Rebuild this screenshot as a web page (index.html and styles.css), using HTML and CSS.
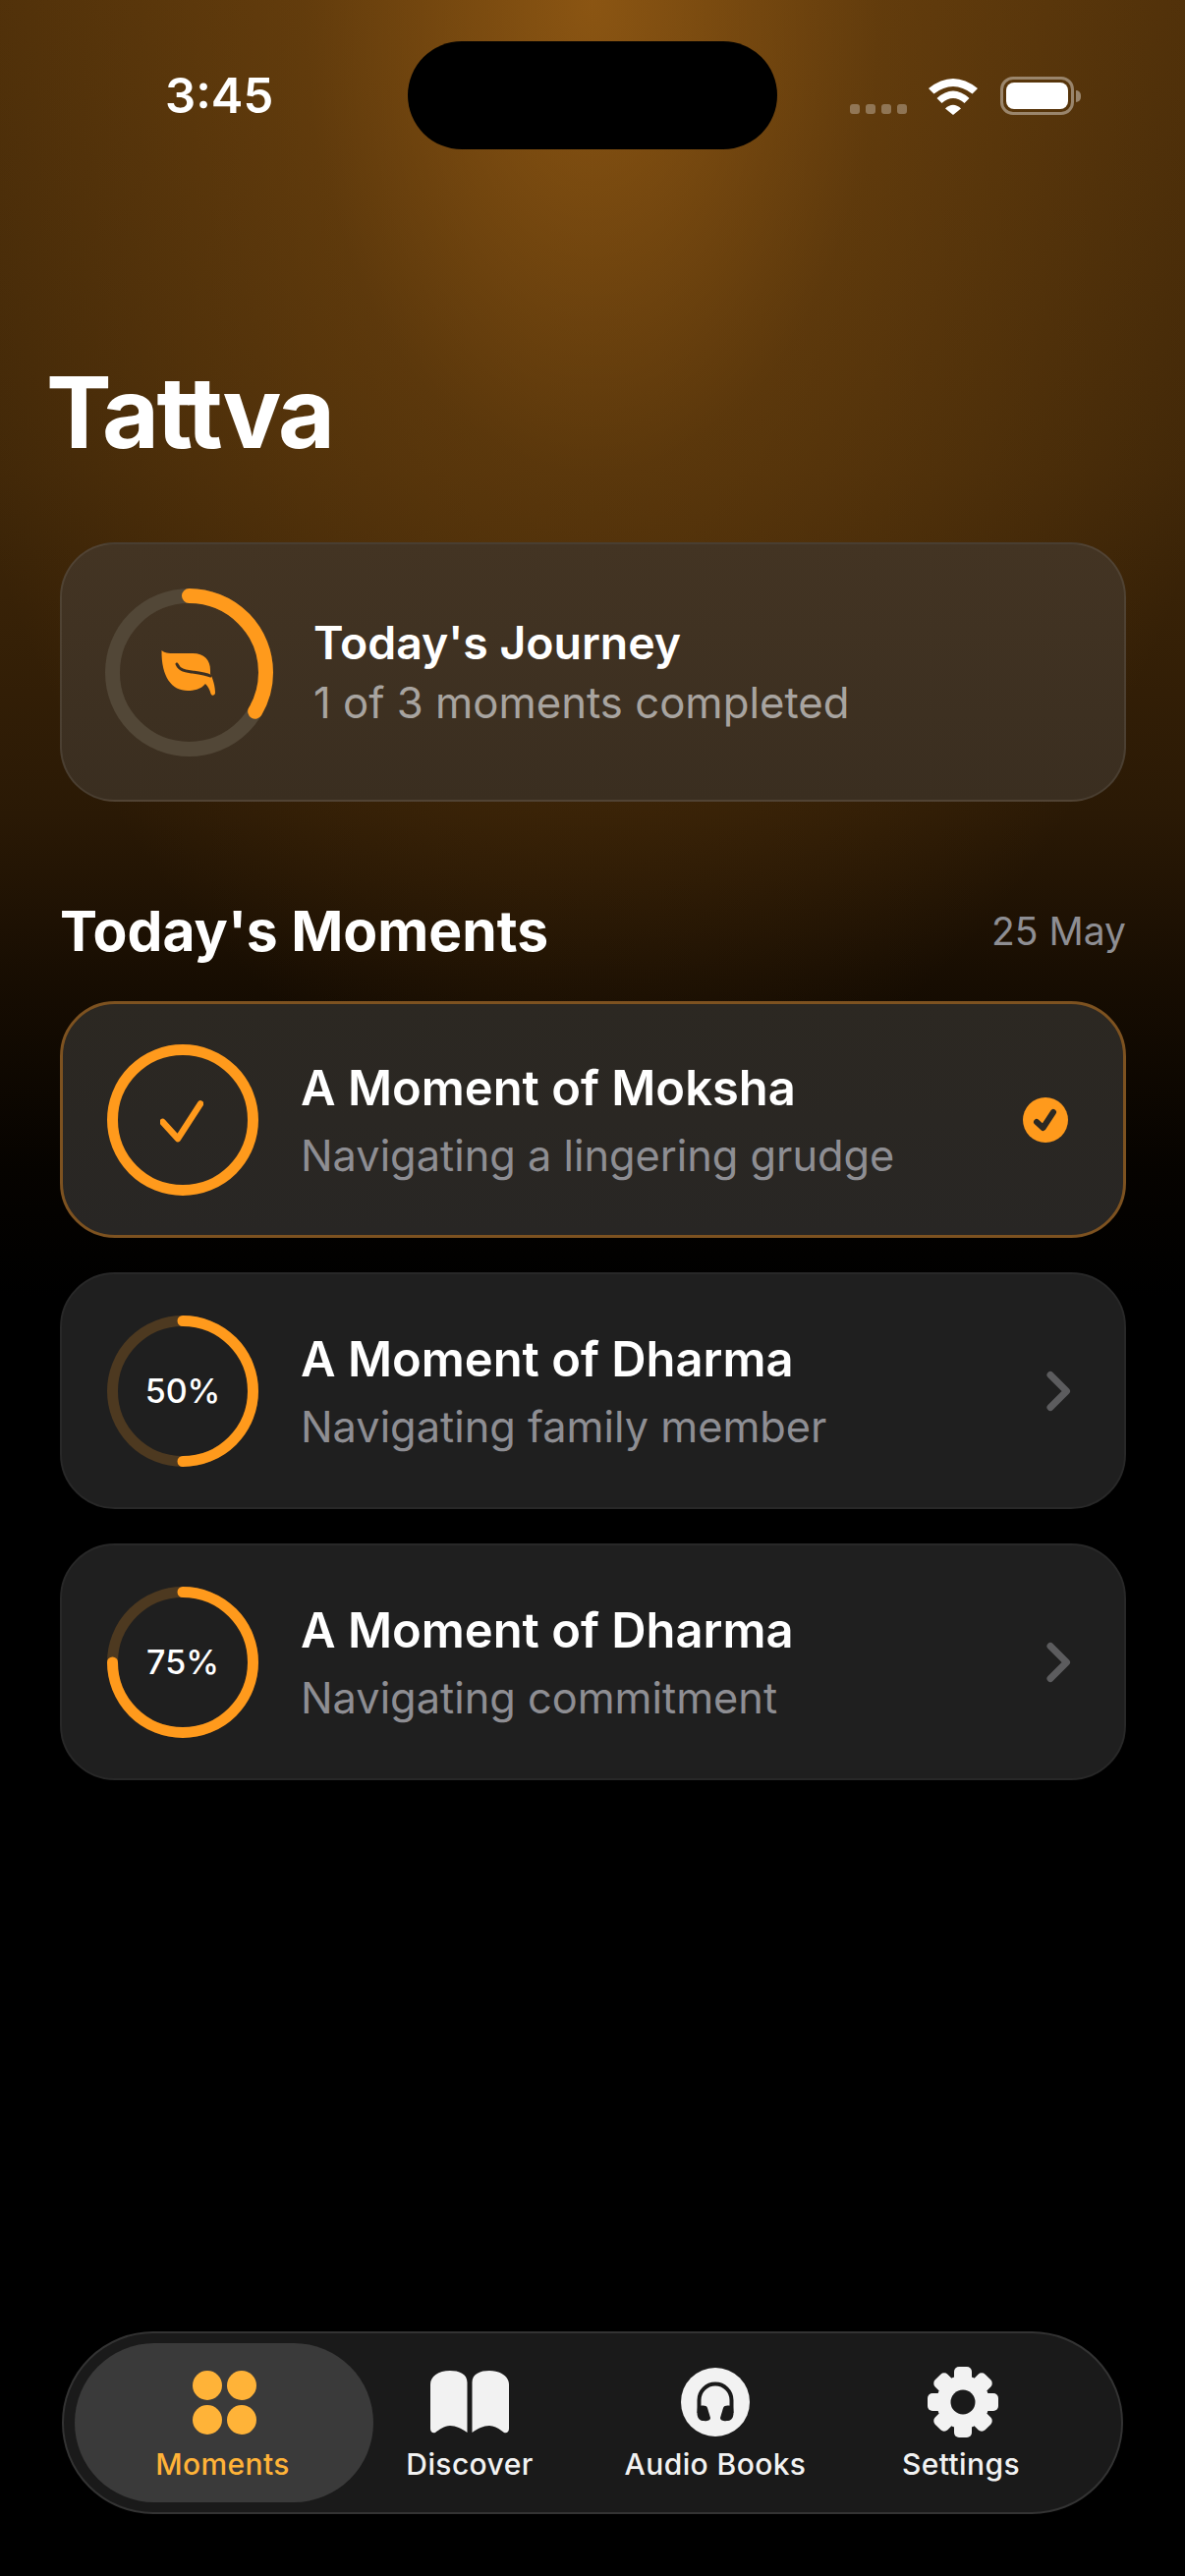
FILE: index.html
```html
<!DOCTYPE html>
<html lang="en">
<head>
    <meta charset="UTF-8" />
    <meta name="viewport" content="width=device-width, initial-scale=1.0" />
    <title>Tattva</title>
    <link rel="stylesheet" href="styles.css">
</head>
<body>
    <div class="screen">
        <!-- Status Bar -->
        <div class="status-bar">
            <span class="status-time">3:45</span>
            <div class="island"></div>
            <div class="status-icons">
                <div class="signal"><i></i><i></i><i></i><i></i></div>
                <svg class="wifi" width="50" height="37" viewBox="0 0 50 37">
                    <path fill="#fff" d="M0 10Q25 -10 50 10L44.5 15.5Q25 .5 5.5 15.5Z" />
                    <path fill="#fff" d="M8.5 20Q25 5 41.5 20L36.5 25Q25 15 13.5 25Z" />
                    <path fill="#fff" d="M17 30.5Q25 23 33 30.5L25 37Z" />
                </svg>
                <div class="battery"><div class="battery-level"></div></div>
            </div>
        </div>

        <h1 class="title">Tattva</h1>

        <!-- Today's Journey -->
        <section class="journey-card">
            <div class="journey-ring">
                <svg width="171" height="171" viewBox="0 0 171 171">
                    <circle cx="85.5" cy="85.5" r="78" fill="none" stroke="#524737" stroke-width="15" />
                    <circle cx="85.5" cy="85.5" r="78" fill="none" stroke="#ff9a1c" stroke-width="15" stroke-linecap="round"
                        pathLength="100" stroke-dasharray="33.5 100" transform="rotate(-90 85.5 85.5)" />
                </svg>
                <svg class="leaf" width="56" height="48" viewBox="0 0 56 48">
                    <path fill="#ff9a1c" d="M.5 1C3 3.5 7 4 14 4L32 4C44 4 50 11 50 21L50 25C53 30 55 38 55 44C55 47 51.5 48 50.5 45C49.5 41 48 38 45 35C40 41 33 42 27 42C11 42 0 28 .5 1Z" />
                    <path fill="none" stroke="#3d3022" stroke-width="3" stroke-linecap="round" d="M16 15C19 22 26 22 32 23C39 24 46 25 50 27" />
                </svg>
            </div>
            <div class="journey-text">
                <h2 class="journey-title">Today's Journey</h2>
                <p class="journey-sub">1 of 3 moments completed</p>
            </div>
        </section>

        <!-- Today's Moments -->
        <div class="moments-header">
            <h2 class="moments-heading">Today's Moments</h2>
            <span class="moments-date">25 May</span>
        </div>

        <section class="moment-list">
            <div class="moment-card moment-card-done">
                <div class="moment-ring">
                    <svg width="154" height="154" viewBox="0 0 154 154">
                        <circle cx="77" cy="77" r="71.5" fill="none" stroke="#ff9a1c" stroke-width="11" />
                    </svg>
                    <svg class="ring-check" width="44" height="44" viewBox="0 0 44 44">
                        <path fill="none" stroke="#ff9a1c" stroke-width="6.5" stroke-linecap="round" stroke-linejoin="round" d="M2.500 22L18 39L41 3.500" />
                    </svg>
                </div>
                <div class="moment-text">
                    <h3 class="moment-title">A Moment of Moksha</h3>
                    <p class="moment-sub">Navigating a lingering grudge</p>
                </div>
                <svg class="moment-end" width="46" height="46" viewBox="0 0 46 46">
                    <circle cx="23" cy="23" r="23" fill="#ff9a1c" />
                    <path fill="none" stroke="#2b2823" stroke-width="6" stroke-linecap="round" stroke-linejoin="round" d="M14 25L20.5 31L31 15" />
                </svg>
            </div>

            <div class="moment-card">
                <div class="moment-ring">
                    <svg width="154" height="154" viewBox="0 0 154 154">
                        <circle cx="77" cy="77" r="71.5" fill="none" stroke="#4d3920" stroke-width="11" />
                        <circle cx="77" cy="77" r="71.5" fill="none" stroke="#ff9a1c" stroke-width="11" stroke-linecap="round"
                            pathLength="100" stroke-dasharray="50 100" transform="rotate(-90 77 77)" />
                    </svg>
                    <span class="ring-label">50%</span>
                </div>
                <div class="moment-text">
                    <h3 class="moment-title">A Moment of Dharma</h3>
                    <p class="moment-sub">Navigating family member</p>
                </div>
                <svg class="moment-end" width="46" height="46" viewBox="0 0 46 46">
                    <path fill="none" stroke="#5c5c5e" stroke-width="7" stroke-linecap="round" stroke-linejoin="round" d="M27 6.500L43.500 23L27 39.500" />
                </svg>
            </div>

            <div class="moment-card">
                <div class="moment-ring">
                    <svg width="154" height="154" viewBox="0 0 154 154">
                        <circle cx="77" cy="77" r="71.5" fill="none" stroke="#4d3920" stroke-width="11" />
                        <circle cx="77" cy="77" r="71.5" fill="none" stroke="#ff9a1c" stroke-width="11" stroke-linecap="round"
                            pathLength="100" stroke-dasharray="75 100" transform="rotate(-90 77 77)" />
                    </svg>
                    <span class="ring-label">75%</span>
                </div>
                <div class="moment-text">
                    <h3 class="moment-title">A Moment of Dharma</h3>
                    <p class="moment-sub">Navigating commitment</p>
                </div>
                <svg class="moment-end" width="46" height="46" viewBox="0 0 46 46">
                    <path fill="none" stroke="#5c5c5e" stroke-width="7" stroke-linecap="round" stroke-linejoin="round" d="M27 6.500L43.500 23L27 39.500" />
                </svg>
            </div>
        </section>

        <!-- Tab Bar -->
        <nav class="tab-bar">
            <div class="tab tab-active">
                <div class="tab-icon">
                    <div class="dots"><i></i><i></i><i></i><i></i></div>
                </div>
                <span class="tab-label">Moments</span>
            </div>
            <div class="tab">
                <div class="tab-icon">
                    <svg width="80" height="64" viewBox="0 0 80 64">
                        <path fill="#f2f2f2" d="M0 14C0 6 8 0 20 0C29 0 37.5 3 37.5 12L37.5 63C32 59 26 56 20 56C14 56 9 60 5 63C2 64 0 62 0 59Z" />
                        <path fill="#f2f2f2" d="M80 14C80 6 72 0 60 0C51 0 42.5 3 42.5 12L42.5 63C48 59 54 56 60 56C66 56 71 60 75 63C78 64 80 62 80 59Z" />
                    </svg>
                </div>
                <span class="tab-label">Discover</span>
            </div>
            <div class="tab">
                <div class="tab-icon">
                    <svg width="70" height="70" viewBox="0 0 70 70">
                        <circle cx="35" cy="35" r="35" fill="#f2f2f2" />
                        <path fill="none" stroke="#1a1a1a" stroke-width="4" d="M18.5 46L18.5 33A16.5 16.5 0 0 1 51.5 33L51.5 46" />
                        <path fill="#1a1a1a" d="M17 40C21 38 26 38 27 41L30 51C30 54 26 54.500 22 54C18 53.500 16.500 50 16.500 46Z" />
                        <path fill="#1a1a1a" d="M53 40C49 38 44 38 43 41L40 51C40 54 44 54.500 48 54C52 53.500 53.500 50 53.500 46Z" />
                    </svg>
                </div>
                <span class="tab-label">Audio Books</span>
            </div>
            <div class="tab">
                <div class="tab-icon tab-icon-gear">
                    <svg width="72" height="72" viewBox="0 0 72 72">
                        <g fill="#f2f2f2">
                            <rect x="27" y="0" width="18" height="72" rx="5" />
                            <rect x="27" y="0" width="18" height="72" rx="5" transform="rotate(45 36 36)" />
                            <rect x="27" y="0" width="18" height="72" rx="5" transform="rotate(90 36 36)" />
                            <rect x="27" y="0" width="18" height="72" rx="5" transform="rotate(135 36 36)" />
                            <circle cx="36" cy="36" r="27" />
                        </g>
                        <circle cx="36" cy="36" r="12.500" fill="#1a1a1a" />
                    </svg>
                </div>
                <span class="tab-label">Settings</span>
            </div>
        </nav>
    </div>
</body>
</html>
```

FILE: styles.css
```css
/* Global CSS */
*,
*::before,
*::after {
    box-sizing: border-box;
}

html,
body {
    margin: 0;
    padding: 0;
    background: #000;
}

body {
    font-family: Inter, 'Noto Sans', sans-serif;
    color: #fff;
}

h1,
h2,
h3,
p {
    margin: 0;
}

.screen {
    display: flex;
    flex-direction: column;
    width: 1206px;
    height: 2622px;
    padding: 0 60px 63px 61px;
    overflow: hidden;
    background:
        radial-gradient(ellipse 700px 1150px at 50% 0, rgba(150, 92, 20, 0.85), rgba(150, 92, 20, 0.3) 42%, rgba(150, 92, 20, 0) 100%),
        linear-gradient(to bottom, #4c2e09 0, #402708 480px, #2a1905 830px, #170d02 1000px, #060300 1190px, #000 1320px);
}

/* Status Bar */
.status-bar {
    display: flex;
    align-items: center;
    margin: 42px -60px 0 -61px;
    height: 110px;
}

.status-time {
    width: 415px;
    padding-left: 168px;
    font-size: 49px;
    font-weight: 600;
}

.island {
    width: 376px;
    height: 110px;
    border-radius: 55px;
    background: #000;
}

.status-icons {
    display: flex;
    align-items: flex-end;
    margin-left: 74px;
}

.signal {
    display: flex;
    gap: 6px;
    margin-bottom: 1px;
}

.signal i {
    width: 10px;
    height: 10px;
    border-radius: 3px;
    background: rgba(255, 255, 255, 0.3);
}

.wifi {
    margin-left: 22px;
}

.battery {
    position: relative;
    width: 75px;
    height: 39px;
    margin-left: 23px;
    padding: 3px;
    border: 3px solid rgba(255, 255, 255, 0.4);
    border-radius: 13px;
}

.battery::after {
    content: '';
    position: absolute;
    top: 11px;
    right: -10px;
    width: 5px;
    height: 12px;
    border-radius: 0 6px 6px 0;
    background: rgba(255, 255, 255, 0.4);
}

.battery-level {
    height: 100%;
    border-radius: 8px;
    background: #fff;
}

.title {
    margin: 218px 0 82px -14px;
    font-size: 100px;
    font-weight: 700;
    line-height: 100px;
    letter-spacing: -2.5px;
}

/* Today's Journey */
.journey-card {
    display: flex;
    align-items: center;
    gap: 41px;
    height: 264px;
    padding-left: 44px;
    border: 2px solid rgba(255, 255, 255, 0.08);
    border-radius: 56px;
    background: linear-gradient(to bottom, #433423, #3a2e20);
}

.journey-ring {
    position: relative;
    width: 171px;
    height: 171px;
}

.leaf {
    position: absolute;
    top: 62px;
    left: 57px;
}

.journey-title {
    font-size: 46.4px;
    font-weight: 600;
    line-height: 58px;
}

.journey-sub {
    margin-top: 5px;
    font-size: 43.7px;
    line-height: 56px;
    color: #a8a4a0;
}

/* Today's Moments */
.moments-header {
    display: flex;
    justify-content: space-between;
    align-items: center;
    margin: 98px 0 37px 0;
    line-height: 68px;
}

.moments-heading {
    font-size: 57px;
    font-weight: 700;
}

.moments-date {
    font-size: 39px;
    color: #8e8e93;
}

.moment-list {
    display: flex;
    flex-direction: column;
    gap: 35px;
}

.moment-card {
    display: flex;
    align-items: center;
    gap: 43px;
    height: 241px;
    padding: 0 56px 0 46px;
    border: 2px solid #282828;
    border-radius: 56px;
    background: #1f1f1f;
}

.moment-card-done {
    border: 3px solid #7d5220;
    padding-left: 45px;
    background: linear-gradient(to bottom, #2c2822, #282624);
}

.moment-ring {
    position: relative;
    flex-shrink: 0;
    width: 154px;
    height: 154px;
}

.ring-check {
    position: absolute;
    top: 57px;
    left: 54px;
}

.ring-label {
    position: absolute;
    top: 0;
    left: 0;
    width: 100%;
    font-size: 34px;
    font-weight: 500;
    line-height: 154px;
    text-align: center;
}

.moment-text {
    flex: 1;
    padding-top: 2px;
}

.moment-title {
    font-size: 48.9px;
    font-weight: 600;
    line-height: 62px;
}

.moment-sub {
    margin-top: 9px;
    font-size: 43.3px;
    line-height: 56px;
    color: #8e8e93;
}

.moment-end {
    flex-shrink: 0;
    overflow: visible;
}

/* Tab Bar */
.tab-bar {
    display: grid;
    grid-template-columns: repeat(4, 250px);
    justify-content: center;
    align-items: center;
    margin: auto 3px 0 2px;
    height: 186px;
    border: 2px solid #333;
    border-radius: 93px;
    background: #1a1a1a;
}

.tab {
    position: relative;
    display: flex;
    flex-direction: column;
    align-items: center;
    height: 162px;
    padding-top: 24px;
}

.tab-active::before {
    content: '';
    position: absolute;
    top: 0;
    bottom: 0;
    left: -27px;
    right: -27px;
    border-radius: 81px;
    background: #3a3a3a;
}

.tab-icon {
    position: relative;
    display: flex;
    justify-content: center;
    align-items: center;
    height: 72px;
}

.tab-icon-gear {
    margin-left: 3px;
}

.dots {
    display: grid;
    grid-template-columns: 30px 30px;
    gap: 5px;
}

.dots i {
    height: 30px;
    border-radius: 50%;
    background: #ffb338;
}

.tab-label {
    position: relative;
    margin-top: 7px;
    font-size: 30px;
    font-weight: 500;
    line-height: 40px;
    letter-spacing: 0.4px;
    color: #f2f2f2;
}

.tab-active .tab-label {
    margin-left: -3px;
    color: #ffb338;
}
```
